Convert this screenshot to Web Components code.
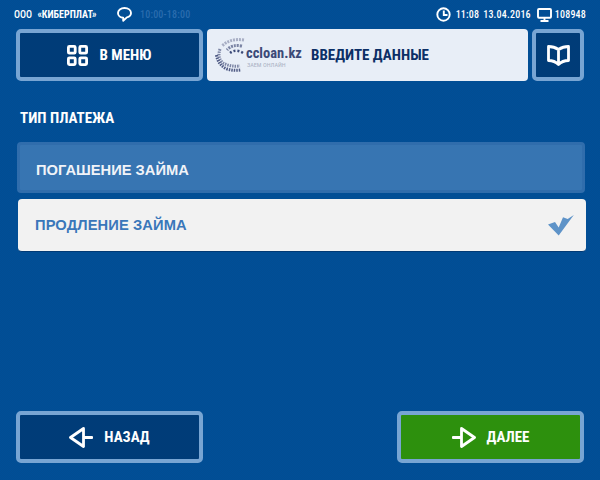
<!DOCTYPE html>
<html lang="ru">
<head>
<meta charset="utf-8">
<title>Тип платежа</title>
<style>
  html, body { margin: 0; height: 100%; }
  body {
    width: 600px; height: 480px; overflow: hidden;
    background-color: #004f98;
    background-image: repeating-conic-gradient(#034d92 0 25%, #004f98 0 50%);
    background-size: 2px 2px;
    font-family: "Roboto", "Liberation Sans", sans-serif;
  }
</style>
</head>
<body>
<pay-screen>
  <status-bar></status-bar>
  <header-row></header-row>
  <option-list></option-list>
  <footer-row></footer-row>
</pay-screen>

<script>
// иконки кнопок
const ICONS = {
  menu: `<svg width="21" height="21" viewBox="0 0 21 21" fill="none" stroke="#fff" stroke-width="2.8"><rect x="1.400" y="1.400" width="6.800" height="6.800" rx="1"/><rect x="12.800" y="1.400" width="6.800" height="6.800" rx="1"/><rect x="1.400" y="12.800" width="6.800" height="6.800" rx="1"/><rect x="12.800" y="12.800" width="6.800" height="6.800" rx="1"/></svg>`,
  book: `<svg width="23" height="21" viewBox="0 0 23 21" fill="none" stroke="#fff" stroke-width="2.800" stroke-linejoin="round"><path d="M11.500 4.500 Q7 1.500 1.500 1.500 V15.500 Q7.500 15.500 11.500 19.500 Q15.500 15.500 21.500 15.500 V1.500 Q16 1.500 11.500 4.500 Z M11.500 4.500 V19.500"/></svg>`,
  back: `<svg width="24" height="21" viewBox="0 0 24 21" fill="none" stroke="#fff" stroke-width="2.800" stroke-linejoin="round" stroke-linecap="round"><path d="M14.500 1.500 L1.500 10.500 L14.500 19.500 Z M14.500 10.500 H23"/></svg>`,
  next: `<svg width="24" height="21" viewBox="0 0 24 21" fill="none" stroke="#fff" stroke-width="2.800" stroke-linejoin="round" stroke-linecap="round"><path d="M9.500 1.500 L22.500 10.500 L9.500 19.500 Z M9.500 10.500 H1"/></svg>`,
  chat: `<svg width="15" height="15" viewBox="0 0 15 15" fill="none" stroke="#fff" stroke-width="1.900" stroke-linejoin="round"><path d="M7.500 1 C3.700 1 1 3.100 1 6 C1 8.700 3.400 10.700 6.200 10.700 L6.200 13.800 L9.900 10.400 C12.400 9.700 14 8 14 6 C14 3.100 11.300 1 7.500 1 Z"/></svg>`,
  clock: `<svg width="15" height="15" viewBox="0 0 15 15" fill="none" stroke="#fff" stroke-width="1.900"><circle cx="7.500" cy="7.500" r="6.200"/><path d="M7.800 3.400 V8 H11.500"/></svg>`,
  screen: `<svg width="15" height="14" viewBox="0 0 15 14" fill="none" stroke="#fff" stroke-width="1.900"><rect x="1" y="1" width="13" height="8.800" rx="1"/><path d="M7.500 10 V12.500 M3.500 13 H11.500"/></svg>`,
  check: `<svg width="26" height="21" viewBox="0 0 26 21"><path fill="#5e93c8" d="M0 9.500 L7 7 L10.700 12.500 L15 2.300 L19.700 4 L25.800 0 L10.700 20.500 Z"/></svg>`
};

// Узкий заголовочный шрифт: Roboto со сжатием по оси wdth
const NARROW = `"Roboto", sans-serif`;

class StatusBar extends HTMLElement {
  constructor() {
    super();
    this.attachShadow({ mode: "open" }).innerHTML = `
      <style>
        :host { display: flex; align-items: center; height: 29px; padding: 0 14px; box-sizing: border-box;
                color: #fff; font: 500 10px "Roboto", sans-serif; font-stretch: 75%; letter-spacing: .2px; }
        .org { width: 103px; flex: none; letter-spacing: 0; }
        .org b { font-weight: 700; margin-left: 3px; }
        .hours { color: #2a6cae; margin-left: 8px; }
        .right { margin-left: auto; display: flex; align-items: center; }
        svg { display: block; }
        .chat { margin-top: -1px; }
        .time { margin: 0 4px 0 5px; }
        .date { margin-right: 6px; }
        .id { margin-left: 3px; }
      </style>
      <span class="org">ООО <b>«КИБЕРПЛАТ»</b></span>
      <span class="chat">${ICONS.chat}</span>
      <span class="hours">10:00-18:00</span>
      <span class="right">
        ${ICONS.clock}<span class="time">11:08</span><span class="date">13.04.2016</span>
        ${ICONS.screen}<span class="id">108948</span>
      </span>`;
  }
}

// кнопка с рамкой: variant = dark | green
class KioskButton extends HTMLElement {
  constructor() {
    super();
    this.attachShadow({ mode: "open" }).innerHTML = `
      <style>
        :host { display: flex; align-items: center; justify-content: center; gap: 11px;
                box-sizing: border-box; height: 52px; border: 4px solid #78a5d3; border-radius: 5px;
                background: #003c78; color: #fff; font: 700 15px ${NARROW}; font-stretch: 75%; }
        :host([variant="green"]) { background: #2d900d; }
        ::slotted(svg) { display: block; }
      </style>
      <slot name="icon"></slot><slot></slot>`;
  }
}

class LogoCard extends HTMLElement {
  constructor() {
    super();
    this.attachShadow({ mode: "open" }).innerHTML = `
      <style>
        :host { display: flex; align-items: center; box-sizing: border-box; height: 52px; flex: 1;
                background: #e8eef7; border-radius: 4px; padding-left: 8px; color: #0c2f66; }
        svg { display: block; flex: none; }
        .brand { margin-left: 1px; margin-top: 4px; display: flex; flex-direction: column; width: 65px; flex: none; }
        .name { font: 700 14.500px/17px ${NARROW}; font-stretch: 75%; color: #3c4a78; white-space: nowrap; }
        .sub { font: 400 6.200px/7px "Roboto", sans-serif; font-stretch: 85%; color: #aab2c4; margin-left: 1px; white-space: nowrap; }
        .title { font: 700 15px ${NARROW}; font-stretch: 75%; color: #0c2f66; }
      </style>
      <svg width="30" height="34" viewBox="0 0 30 34" fill="none">
        <path d="M29 2 Q15 0 7 8" stroke="#a8aec4" stroke-width="3" stroke-dasharray="2 1"/>
        <path d="M27 8 Q17 6 12 12" stroke="#7a83a3" stroke-width="3" stroke-dasharray="2 1"/>
        <path d="M28 15 Q20 10 14 16" stroke="#3c4a78" stroke-width="2.500" stroke-dasharray="2 2"/>
        <path d="M5 11 Q2 20 8 25 Q15 29 25 28" stroke="#7a83a3" stroke-width="3" stroke-dasharray="1.500 1"/>
        <path d="M1.500 17 Q3 27 12 31 Q19 33 26 32" stroke="#4f5a84" stroke-width="3" stroke-dasharray="1.500 1"/>
      </svg>
      <span class="brand"><span class="name">ccloan.kz</span><span class="sub">ЗАЕМ ОНЛАЙН</span></span>
      <span class="title"><slot></slot></span>`;
  }
}

class HeaderRow extends HTMLElement {
  constructor() {
    super();
    this.attachShadow({ mode: "open" }).innerHTML = `
      <style>
        :host { display: flex; gap: 4px; padding: 0 16px; }
        .menu { flex: 0 0 187px; }
        .book { flex: 0 0 52px; }
      </style>
      <kiosk-button class="menu">${ICONS.menu.replace("<svg", '<svg slot="icon"')}В МЕНЮ</kiosk-button>
      <logo-card>ВВЕДИТЕ ДАННЫЕ</logo-card>
      <kiosk-button class="book">${ICONS.book.replace("<svg", '<svg slot="icon"')}</kiosk-button>`;
  }
}

class OptionItem extends HTMLElement {
  constructor() {
    super();
    this.attachShadow({ mode: "open" }).innerHTML = `
      <style>
        :host { display: flex; align-items: center; justify-content: space-between; box-sizing: border-box;
                height: 51px; padding: 4px 12px 0 16px; border: 3px solid #306dac; border-radius: 4px;
                background: #3775b2; color: #f0f3f8; font: 700 14.700px "Liberation Sans", sans-serif; }
        :host([selected]) { background: #f2f2f2; border: 0; height: 53px; padding: 0 12px 0 17px; color: #3a77ba;
                            margin: 0 -1px 0 1px; border-bottom: 1px solid #013a75; letter-spacing: .1px; }
        .check { display: none; }
        :host([selected]) .check { display: block; }
        svg { display: block; }
      </style>
      <slot></slot><span class="check">${ICONS.check}</span>`;
  }
}

class OptionList extends HTMLElement {
  constructor() {
    super();
    this.attachShadow({ mode: "open" }).innerHTML = `
      <style>
        :host { display: block; padding: 0 15px 0 17px; }
        h2 { margin: 28px 0 15px 3px; font: 700 15px/18px ${NARROW}; font-stretch: 75%; color: #fff; }
        .items { display: flex; flex-direction: column; gap: 6px; }
      </style>
      <h2>ТИП ПЛАТЕЖА</h2>
      <div class="items">
        <option-item>ПОГАШЕНИЕ ЗАЙМА</option-item>
        <option-item selected>ПРОДЛЕНИЕ ЗАЙМА</option-item>
      </div>`;
  }
}

class FooterRow extends HTMLElement {
  constructor() {
    super();
    this.attachShadow({ mode: "open" }).innerHTML = `
      <style>
        :host { display: flex; justify-content: space-between; padding: 0 16px 17px; margin-top: auto; }
        kiosk-button { width: 187px; }
      </style>
      <kiosk-button>${ICONS.back.replace("<svg", '<svg slot="icon"')}НАЗАД</kiosk-button>
      <kiosk-button variant="green">${ICONS.next.replace("<svg", '<svg slot="icon"')}ДАЛЕЕ</kiosk-button>`;
  }
}

class PayScreen extends HTMLElement {
  constructor() {
    super();
    this.attachShadow({ mode: "open" }).innerHTML = `
      <style>:host { display: flex; flex-direction: column; height: 480px; box-sizing: border-box; }</style>
      <slot></slot>`;
  }
}

customElements.define("status-bar", StatusBar);
customElements.define("kiosk-button", KioskButton);
customElements.define("logo-card", LogoCard);
customElements.define("header-row", HeaderRow);
customElements.define("option-item", OptionItem);
customElements.define("option-list", OptionList);
customElements.define("footer-row", FooterRow);
customElements.define("pay-screen", PayScreen);
</script>
</body>
</html>
